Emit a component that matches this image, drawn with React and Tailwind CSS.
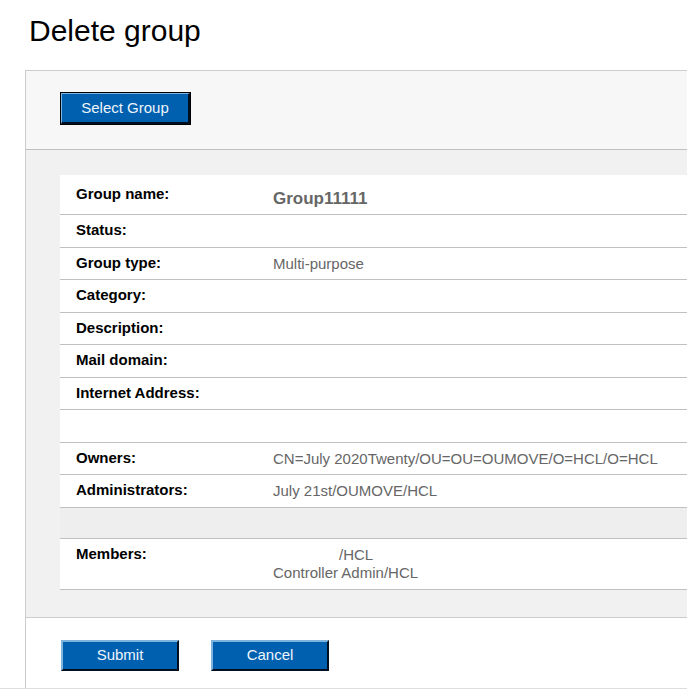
const rows = [
  { label: 'Group name:', value: 'Group11111', height: 'h-[39px]', strong: true },
  { label: 'Status:', height: 'h-[33px]' },
  { label: 'Group type:', value: 'Multi-purpose', height: 'h-[32px]' },
  { label: 'Category:', height: 'h-[33px]' },
  { label: 'Description:', height: 'h-[32px]' },
  { label: 'Mail domain:', height: 'h-[33px]' },
  { label: 'Internet Address:', height: 'h-[32px]' },
  { height: 'h-[33px]' },
  { label: 'Owners:', value: 'CN=July 2020Twenty/OU=OU=OUMOVE/O=HCL/O=HCL', height: 'h-[32px]' },
  { label: 'Administrators:', value: 'July 21st/OUMOVE/HCL', height: 'h-[33px]' },
  { height: 'h-[31px]', spacer: true },
  { label: 'Members:', members: ['/HCL', 'Controller Admin/HCL'], height: 'h-[51px]' },
];

const bevel =
  'border-2 border-t-[#7db4dd] border-l-[#7db4dd] border-r-[#001020] border-b-[#001020] bg-[#0060b0] text-center text-[15px] leading-[18px] text-[#eef5fb]';

function Row({ label, value, members, height, strong, spacer }) {
  return (
    <tr className={`${height} border-b border-[#c0c0c0] ${spacer ? 'bg-[#eeeeee]' : 'bg-white'}`}>
      {label ? (
        <th
          scope="row"
          className={`w-[213px] pl-4 text-left align-top font-bold text-black ${strong ? 'pt-[10px]' : 'pt-[6px]'}`}
        >
          {label}
        </th>
      ) : (
        <td className="w-[213px]" />
      )}
      <td
        className={`align-top text-[#666666] ${strong ? 'pt-[15px] text-[17px] font-bold' : 'pt-[7px]'}`}
      >
        {members
          ? members.map((name) => (
              <div key={name} className={name.startsWith('/') ? 'pl-[66px]' : ''}>
                {name}
              </div>
            ))
          : value}
      </td>
    </tr>
  );
}

export default function App() {
  return (
    <div className="flex min-h-screen flex-col overflow-x-hidden border-b border-[#dddddd] bg-white font-['Liberation_Sans',Arial,sans-serif]">
      <h1 className="pt-[15px] pb-[23px] pl-[29px] text-[30px] leading-8 text-black">Delete group</h1>
      <main className="ml-[25px] flex grow flex-col border-t border-l border-[#cccccc]">
        <section className="border-b border-[#c0c0c0] bg-[#f7f7f7] pt-[21px] pb-6 pl-[34px]">
          <div className="w-[131px] border border-black">
            <button type="button" className={`${bevel} block h-[31px] w-full border-t border-l`}>
              Select Group
            </button>
          </div>
        </section>
        <section className="border-b border-[#cccccc] bg-[#f1f1f1] pt-[25px] pb-[27px] pl-[34px]">
          <table className="w-full border-collapse text-[15px] leading-[18px]">
            <tbody>
              {rows.map((row, index) => (
                <Row key={index} {...row} />
              ))}
            </tbody>
          </table>
        </section>
        <section className="flex gap-8 pt-[22px] pb-4 pl-[35px]">
          <button type="button" className={`${bevel} h-[31px] w-[118px]`}>
            Submit
          </button>
          <button type="button" className={`${bevel} h-[31px] w-[118px]`}>
            Cancel
          </button>
        </section>
      </main>
    </div>
  );
}
